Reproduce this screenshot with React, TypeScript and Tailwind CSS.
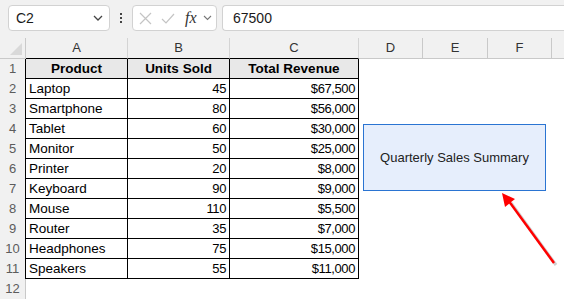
import React from "react";

const data: [string, string, string][] = [
  ["Laptop", "45", "$67,500"],
  ["Smartphone", "80", "$56,000"],
  ["Tablet", "60", "$30,000"],
  ["Monitor", "50", "$25,000"],
  ["Printer", "20", "$8,000"],
  ["Keyboard", "90", "$9,000"],
  ["Mouse", "110", "$5,500"],
  ["Router", "35", "$7,000"],
  ["Headphones", "75", "$15,000"],
  ["Speakers", "55", "$11,000"],
];

const font = { fontFamily: '"Liberation Sans", Arial, sans-serif' };

function Row({ n, a, b, c, header }: { n: number; a: string; b: string; c: string; header?: boolean }) {
  const inTable = n <= 11;
  const bd = inTable ? "border-r border-b border-black" : "";
  return (
    <div className="flex h-[20px]">
      <div
        className={`w-[26px] shrink-0 flex items-center justify-center text-[13px] text-[#5c5c5c] bg-[#f1f1f1] border-r ${
          inTable ? "border-black" : "border-[#c9c9c9]"
        }`}
      >
        {n}
      </div>
      <div
        className={`w-[102px] shrink-0 flex items-center pt-[1px] text-black ${bd} ${
          header ? "justify-center font-bold bg-[#e8e8e8] text-[13.5px]" : "pl-[3px] text-[13.5px]"
        }`}
      >
        {a}
      </div>
      <div
        className={`w-[102px] shrink-0 flex items-center pt-[1px] text-black ${bd} ${
          header ? "justify-center font-bold bg-[#e8e8e8] text-[13.5px]" : "justify-end pr-[3px] text-[13px] tracking-[-0.4px]"
        }`}
      >
        {b}
      </div>
      <div
        className={`w-[129px] shrink-0 flex items-center pt-[1px] text-black ${bd} ${
          header ? "justify-center font-bold bg-[#e8e8e8] text-[13.5px]" : "justify-end pr-[3px] text-[13px] tracking-[-0.4px]"
        }`}
      >
        {c}
      </div>
      <div className="w-[64px] shrink-0" />
      <div className="w-[65px] shrink-0" />
      <div className="w-[64px] shrink-0" />
      <div className="flex-1" />
    </div>
  );
}

export default function App() {
  return (
    <div className="relative w-[564px] h-[299px] bg-white overflow-hidden" style={font}>
      {/* toolbar */}
      <div className="h-[38px] bg-[#f1f1f1] flex items-start pt-[5px] pl-[8px]">
        <div className="w-[102px] h-[26px] bg-white border border-[#d2d2d2] rounded-[4px] flex items-center pl-[7px] pr-[6px] justify-between">
          <span className="text-[14px] text-[#1a1a1a]">C2</span>
          <svg width="10" height="6" viewBox="0 0 10 6">
            <path d="M1 1 L5 5 L9 1" stroke="#444" strokeWidth="1.3" fill="none" />
          </svg>
        </div>
        <div className="w-[22px] h-[26px] flex flex-col items-center justify-center gap-[2px]">
          <div className="w-[2px] h-[2px] bg-[#444]" />
          <div className="w-[2px] h-[2px] bg-[#444]" />
          <div className="w-[2px] h-[2px] bg-[#444]" />
        </div>
        <div className="w-[85px] h-[26px] bg-white border border-[#d2d2d2] rounded-[4px] flex items-center pl-[6px]">
          <svg width="13" height="13" viewBox="0 0 13 13">
            <path d="M1 1 L12 12 M12 1 L1 12" stroke="#c4c4c4" strokeWidth="1.2" fill="none" />
          </svg>
          <svg width="14" height="11" viewBox="0 0 14 11" className="ml-[9px]">
            <path d="M1 6 L5 10 L13 1" stroke="#c4c4c4" strokeWidth="1.2" fill="none" />
          </svg>
          <span
            className="ml-[10px] text-[16px] italic text-[#333] leading-none"
            style={{ fontFamily: '"Liberation Serif", "DejaVu Serif", serif' }}
          >
            fx
          </span>
          <svg width="9" height="6" viewBox="0 0 9 6" className="ml-[6px]">
            <path d="M1 1 L4.5 4.5 L8 1" stroke="#777" strokeWidth="1.1" fill="none" />
          </svg>
        </div>
        <div className="ml-[5px] flex-1 h-[26px] bg-white border border-[#d2d2d2] rounded-l-[4px] border-r-0 flex items-center pl-[10px]">
          <span className="text-[14px] text-[#1a1a1a]">67500</span>
        </div>
      </div>
      {/* column headers */}
      <div className="flex h-[21px] bg-[#f1f1f1] text-[13px] text-[#333]">
        <div className="w-[26px] shrink-0 border-r border-b border-[#c9c9c9] relative">
          <svg width="12" height="12" viewBox="0 0 12 12" className="absolute right-[3px] bottom-[3px]">
            <path d="M12 0 L12 12 L0 12 Z" fill="#d9d9d9" />
          </svg>
        </div>
        <div className="w-[102px] shrink-0 border-r border-[#d4d4d4] border-b border-b-black flex items-center justify-center">A</div>
        <div className="w-[102px] shrink-0 border-r border-[#d4d4d4] border-b border-b-black flex items-center justify-center">B</div>
        <div className="w-[129px] shrink-0 border-r border-[#d4d4d4] border-b border-b-black flex items-center justify-center">C</div>
        <div className="w-[64px] shrink-0 border-r border-b border-[#c9c9c9] flex items-center justify-center">D</div>
        <div className="w-[65px] shrink-0 border-r border-b border-[#c9c9c9] flex items-center justify-center">E</div>
        <div className="w-[64px] shrink-0 border-r border-b border-[#c9c9c9] flex items-center justify-center">F</div>
        <div className="flex-1 border-b border-[#c9c9c9]" />
      </div>
      <Row n={1} a="Product" b="Units Sold" c="Total Revenue" header />
      {data.map((r, i) => (
        <Row key={i} n={i + 2} a={r[0]} b={r[1]} c={r[2]} />
      ))}
      <Row n={12} a="" b="" c="" />

      {/* text box */}
      <div className="absolute left-[363px] top-[124px] w-[183px] h-[67px] bg-[#e6eefc] border border-[#2a74d2] flex items-center justify-center">
        <span className="text-[13px] text-[#222]">Quarterly Sales Summary</span>
      </div>

      {/* arrow */}
      <svg className="absolute left-0 top-0" width="564" height="299" viewBox="0 0 564 299">
        <line x1="556" y1="265" x2="511" y2="203" stroke="#b0b0b0" strokeWidth="3" opacity="0.6" />
        <line x1="554" y1="263" x2="508" y2="200" stroke="#ff0000" strokeWidth="2.5" />
        <path d="M502 193 L515 199 L505 207 Z" fill="#ff0000" />
      </svg>
    </div>
  );
}
